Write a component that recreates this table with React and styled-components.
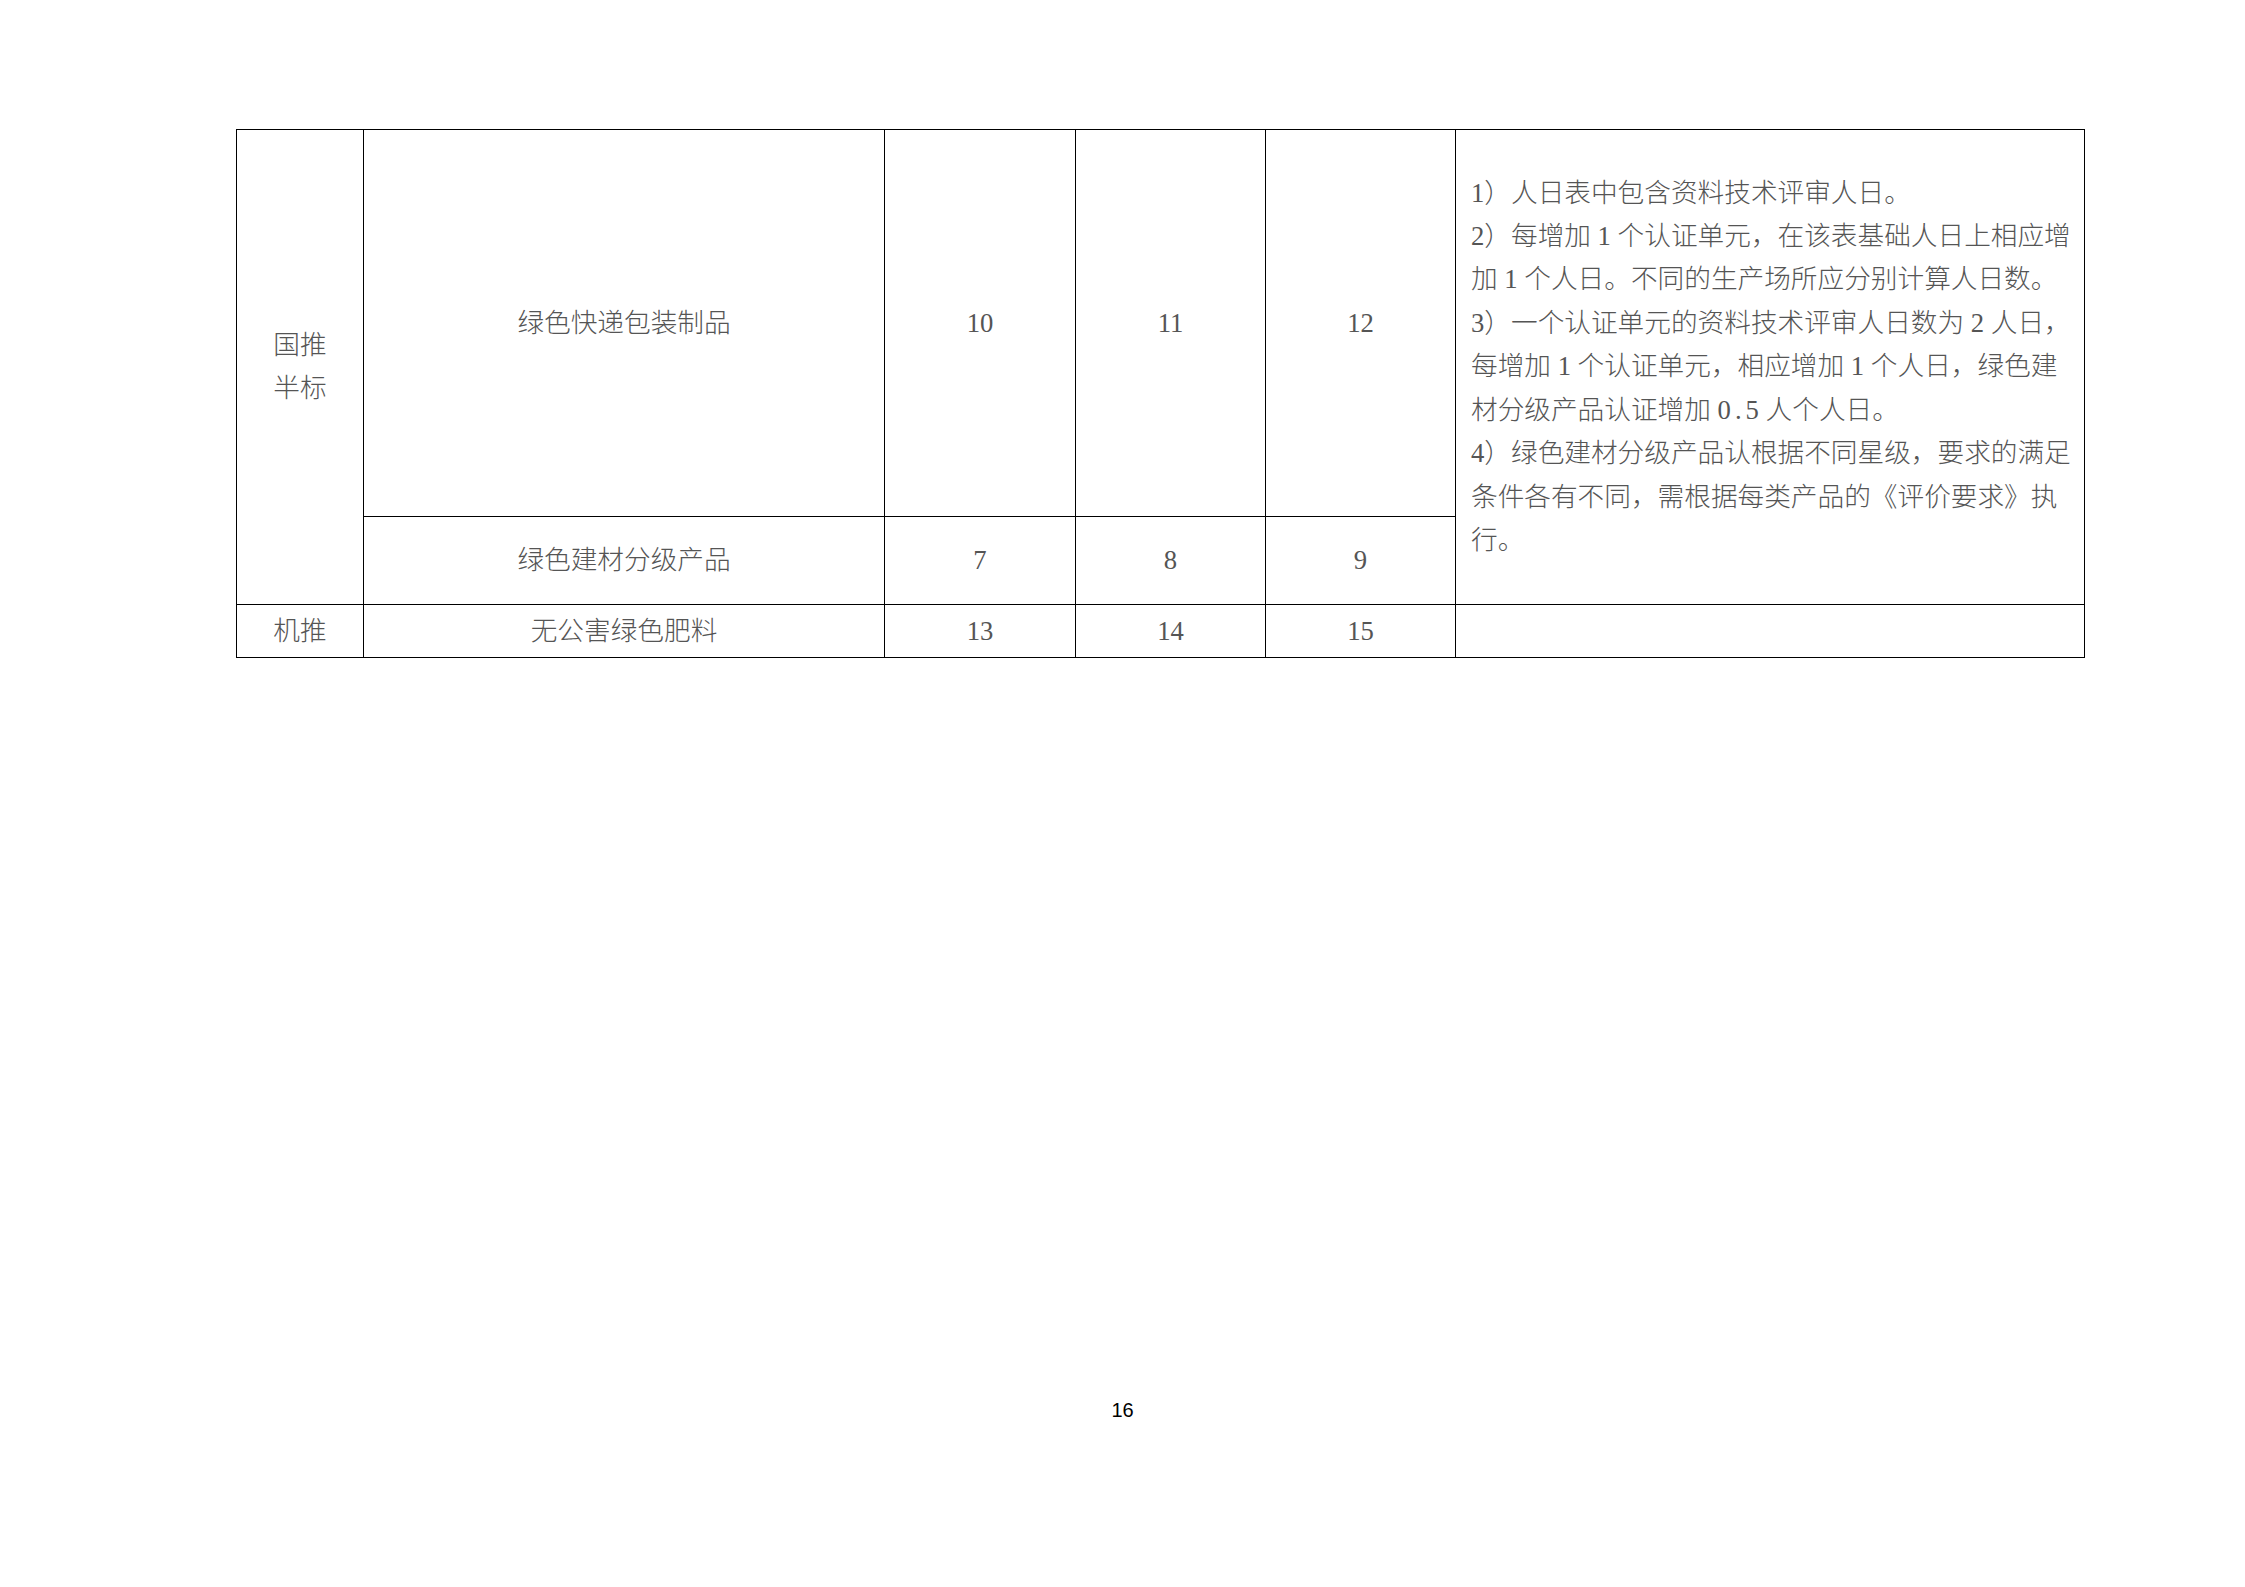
import styled, { createGlobalStyle } from 'styled-components';

const GlobalStyle = createGlobalStyle`
  html, body {
    margin: 0;
    padding: 0;
    background: #fff;
  }
`;

const Page = styled.div`
  width: 2245px;
  height: 1587px;
  box-sizing: border-box;
  padding: 129px 0 0 236px;
  display: flex;
  flex-direction: column;
  font-family: 'Liberation Serif', 'Noto Sans CJK SC', serif;
  font-size: 26.67px;
  font-weight: 300;
  color: #555;
`;

const Table = styled.table`
  width: 1848px;
  table-layout: fixed;
  border-collapse: collapse;
`;

const Row = styled.tr`
  height: ${p => p.h}px;
`;

const Cell = styled.td`
  border: 1px solid #000;
  padding: 0;
  text-align: center;
  vertical-align: middle;
  line-height: 43px;
  white-space: nowrap;
`;

const NoteCell = styled(Cell)`
  text-align: left;
  padding-left: 15px;
  line-height: 43.4px;
`;

const Line = styled.div`
  white-space: nowrap;
`;

const Wide = styled.span`
  letter-spacing: 4px;
`;

const PageNumber = styled.div`
  margin-top: 741px;
  margin-left: -236px;
  width: 2245px;
  text-align: center;
  font-family: 'Liberation Sans', sans-serif;
  font-size: 20px;
  font-weight: 400;
  color: #000;
`;

const notes = [
  '1）人日表中包含资料技术评审人日。',
  '2）每增加 1 个认证单元，在该表基础人日上相应增',
  '加 1 个人日。不同的生产场所应分别计算人日数。',
  '3）一个认证单元的资料技术评审人日数为 2 人日，',
  '每增加 1 个认证单元，相应增加 1 个人日，绿色建',
  <>
    材分级产品认证增加 <Wide>0.</Wide>5 人个人日。
  </>,
  '4）绿色建材分级产品认根据不同星级，要求的满足',
  '条件各有不同，需根据每类产品的《评价要求》执',
  '行。',
];

const widths = [127, 521, 191, 190, 190, 629];

export default function App() {
  return (
    <>
      <GlobalStyle />
      <Page>
        <Table>
          <colgroup>
            {widths.map((w, i) => (
              <col key={i} style={{ width: w }} />
            ))}
          </colgroup>
          <tbody>
            <Row h={387}>
              <Cell rowSpan={2}>
                国推
                <br />
                半标
              </Cell>
              <Cell>绿色快递包装制品</Cell>
              <Cell>10</Cell>
              <Cell>11</Cell>
              <Cell>12</Cell>
              <NoteCell rowSpan={2}>
                {notes.map((n, i) => (
                  <Line key={i}>{n}</Line>
                ))}
              </NoteCell>
            </Row>
            <Row h={88}>
              <Cell>绿色建材分级产品</Cell>
              <Cell>7</Cell>
              <Cell>8</Cell>
              <Cell>9</Cell>
            </Row>
            <Row h={53}>
              <Cell>机推</Cell>
              <Cell>无公害绿色肥料</Cell>
              <Cell>13</Cell>
              <Cell>14</Cell>
              <Cell>15</Cell>
              <Cell />
            </Row>
          </tbody>
        </Table>
        <PageNumber>16</PageNumber>
      </Page>
    </>
  );
}
